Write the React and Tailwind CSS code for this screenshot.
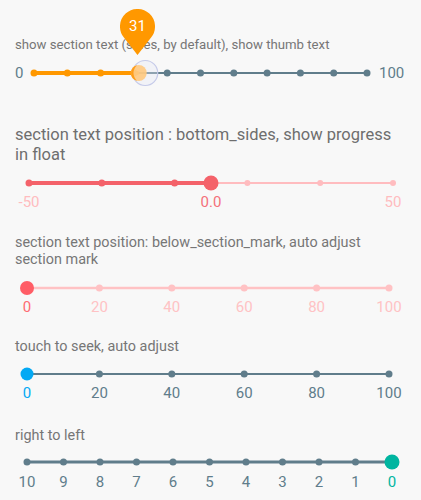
import React from "react";

const SLATE = "#607d8b";

function ticks(n, x0, len) {
  return Array.from({ length: n }, (_, i) => x0 + (i * len) / (n - 1));
}

function Labels({ items, className }) {
  return (
    <div className={"flex justify-between px-[8px] h-[18px] leading-[18px] text-[15px] " + className}>
      {items.map((it, i) => (
        <div key={i} className="w-0 flex justify-center">
          <span className="whitespace-nowrap" style={{ color: it.c }}>{it.t}</span>
        </div>
      ))}
    </div>
  );
}

export default function App() {
  const t1 = ticks(11, 8, 333);
  const v1 = 8 + 0.31 * 333;
  const t2 = ticks(6, 8, 364);
  const v2 = 8 + 182;
  const t3 = ticks(6, 8, 362);
  const t5 = ticks(11, 8, 365);

  const pinPath = "M17.5 46 L3.7 28.25 A17.5 17.5 0 1 1 31.3 28.25 Z";

  return (
    <div className="relative w-[421px] h-[500px] overflow-hidden bg-[#f8f8f8] pt-[37px] font-['Roboto','Noto_Sans',sans-serif] text-[#767676]">
      {/* Section 1 */}
      <div className="ml-[15px] text-[13.2px] leading-[16px] whitespace-nowrap">
        show section text (sides, by default), show thumb text
      </div>
      <div className="mt-[5px] h-[30px] flex items-center">
        <div className="ml-[15px] w-[11px] text-[15px] leading-[18px] text-[#607d8b]">0</div>
        <svg width="349" height="30" viewBox="0 0 349 30" className="block">
          <line x1={v1} y1="15" x2="341" y2="15" stroke={SLATE} strokeWidth="2" />
          <line x1="8" y1="15" x2={v1} y2="15" stroke="#ff9800" strokeWidth="4" strokeLinecap="round" />
          {t1.map((x, i) => (
            <circle key={i} cx={x} cy="15" r="3.5" fill={x < v1 ? "#ff9800" : SLATE} />
          ))}
          <circle cx={v1 + 8} cy="15" r="12.5" fill="rgba(230,232,245,0.35)" stroke="#c5cae9" strokeWidth="1.2" />
          <circle cx={v1 + 1.5} cy="15" r="8" fill="#ffc97e" opacity="0.9" />
          <path d={`M${v1} 7.2 A8 8 0 0 0 ${v1} 22.8 A10 10 0 0 1 ${v1} 7.2 Z`} fill="#ff9e1a" />
        </svg>
        <div className="ml-[4px] text-[15px] leading-[18px] text-[#607d8b]">100</div>
      </div>

      {/* Pin indicator (overlays title) */}
      <div className="absolute left-[120px] top-[9px] w-[35px] h-[46px]">
        <svg width="35" height="46" viewBox="0 0 35 46" className="absolute inset-0">
          <path d={pinPath} fill="#ff9800" />
        </svg>
        <div className="absolute left-0 top-[8px] w-[35px] text-center text-white text-[15px] leading-[18px]">31</div>
      </div>

      {/* Section 2 */}
      <div className="mt-[37px] ml-[15px] text-[16.5px] leading-[20px] whitespace-nowrap text-[#6e6e6e]">
        section text position : bottom_sides, show progress
        <br />
        in float
      </div>
      <svg width="380" height="16" viewBox="0 0 380 16" className="block mt-[10px] ml-[21px]">
        <line x1={v2} y1="8" x2="372" y2="8" stroke="#ffbcbf" strokeWidth="2" />
        <line x1="8" y1="8" x2={v2} y2="8" stroke="#f4626a" strokeWidth="4" strokeLinecap="round" />
        {t2.map((x, i) => (
          <circle key={i} cx={x} cy="8" r={x < v2 ? 3.5 : 3} fill={x < v2 ? "#f4626a" : "#ffbcbf"} />
        ))}
        <circle cx={v2} cy="8" r="7.5" fill="#f4626a" />
      </svg>
      <Labels
        className="mt-[2px] ml-[21px] w-[380px]"
        items={[
          { t: "-50", c: "#ffbcbf" },
          { t: "0.0", c: "#f4707a" },
          { t: "50", c: "#ffbcbf" },
        ]}
      />

      {/* Section 3 */}
      <div className="mt-[23px] ml-[15px] text-[14.4px] leading-[17px] whitespace-nowrap">
        section text position: below_section_mark, auto adjust
        <br />
        section mark
      </div>
      <svg width="378" height="16" viewBox="0 0 378 16" className="block mt-[12px] ml-[19px]">
        <line x1="8" y1="8" x2="370" y2="8" stroke="#ffc2c4" strokeWidth="2.5" />
        {t3.map((x, i) => (
          <circle key={i} cx={x} cy="8" r="3.5" fill="#ffc2c4" />
        ))}
        <circle cx="8" cy="8" r="7" fill="#ff5d66" />
      </svg>
      <Labels
        className="mt-[2px] ml-[19px] w-[378px]"
        items={[
          { t: "0", c: "#ff6b72" },
          { t: "20", c: "#ffc2c4" },
          { t: "40", c: "#ffc2c4" },
          { t: "60", c: "#ffc2c4" },
          { t: "80", c: "#ffc2c4" },
          { t: "100", c: "#ffc2c4" },
        ]}
      />

      {/* Section 4 */}
      <div className="mt-[23px] ml-[15px] text-[14.4px] leading-[16px] whitespace-nowrap">
        touch to seek, auto adjust
      </div>
      <svg width="378" height="16" viewBox="0 0 378 16" className="block mt-[11px] ml-[19px]">
        <line x1="8" y1="8" x2="370" y2="8" stroke={SLATE} strokeWidth="2" />
        {t3.map((x, i) => (
          <circle key={i} cx={x} cy="8" r="3.5" fill={SLATE} />
        ))}
        <circle cx="8" cy="8" r="6.5" fill="#03a9f4" />
      </svg>
      <Labels
        className="mt-[2px] ml-[19px] w-[378px]"
        items={[
          { t: "0", c: "#03a9f4" },
          { t: "20", c: SLATE },
          { t: "40", c: SLATE },
          { t: "60", c: SLATE },
          { t: "80", c: SLATE },
          { t: "100", c: SLATE },
        ]}
      />

      {/* Section 5 */}
      <div className="mt-[26px] ml-[15px] text-[14.4px] leading-[16px] whitespace-nowrap">
        right to left
      </div>
      <svg width="381" height="16" viewBox="0 0 381 16" className="block mt-[10px] ml-[19px]">
        <line x1="8" y1="8" x2="373" y2="8" stroke={SLATE} strokeWidth="3" />
        {t5.map((x, i) => (
          <circle key={i} cx={x} cy="8" r="3.5" fill={SLATE} />
        ))}
        <circle cx="373" cy="8" r="7.5" fill="#00b5a0" />
      </svg>
      <Labels
        className="mt-[3px] ml-[19px] w-[381px]"
        items={["10", "9", "8", "7", "6", "5", "4", "3", "2", "1", "0"].map((t) => ({
          t,
          c: t === "0" ? "#00b5a0" : SLATE,
        }))}
      />
    </div>
  );
}
